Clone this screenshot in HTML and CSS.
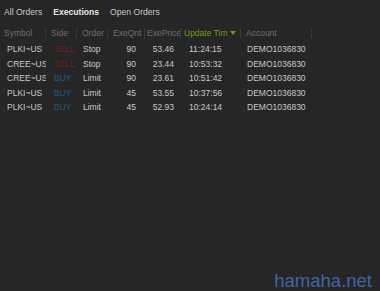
FILE: index.html
```html
<!DOCTYPE html>
<html lang="en">
<head>
    <meta charset="UTF-8">
    <title>Executions</title>
    <link rel="stylesheet" href="styles.css">
</head>
<body>
    <div class="panel">
        <div class="tabs">
            <span>All Orders</span>
            <span class="active">Executions</span>
            <span>Open Orders</span>
        </div>
        <div class="grid">
            <div class="row head">
                <div class="c sym">Symbol</div>
                <div class="c side">Side</div>
                <div class="c ord">Order</div>
                <div class="c qty">ExeQnt</div>
                <div class="c price">ExePrice</div>
                <div class="c time sorted">Update Tim<span class="arrow"></span></div>
                <div class="c acct">Account</div>
            </div>
            <div class="row">
                <div class="c sym">PLKI~US</div>
                <div class="c side sell">SELL</div>
                <div class="c ord">Stop</div>
                <div class="c qty">90</div>
                <div class="c price">53.46</div>
                <div class="c time">11:24:15</div>
                <div class="c acct">DEMO1036830</div>
            </div>
            <div class="row">
                <div class="c sym">CREE~US</div>
                <div class="c side sell">SELL</div>
                <div class="c ord">Stop</div>
                <div class="c qty">90</div>
                <div class="c price">23.44</div>
                <div class="c time">10:53:32</div>
                <div class="c acct">DEMO1036830</div>
            </div>
            <div class="row">
                <div class="c sym">CREE~US</div>
                <div class="c side buy">BUY</div>
                <div class="c ord">Limit</div>
                <div class="c qty">90</div>
                <div class="c price">23.61</div>
                <div class="c time">10:51:42</div>
                <div class="c acct">DEMO1036830</div>
            </div>
            <div class="row">
                <div class="c sym">PLKI~US</div>
                <div class="c side buy">BUY</div>
                <div class="c ord">Limit</div>
                <div class="c qty">45</div>
                <div class="c price">53.55</div>
                <div class="c time">10:37:56</div>
                <div class="c acct">DEMO1036830</div>
            </div>
            <div class="row">
                <div class="c sym">PLKI~US</div>
                <div class="c side buy">BUY</div>
                <div class="c ord">Limit</div>
                <div class="c qty">45</div>
                <div class="c price">52.93</div>
                <div class="c time">10:24:14</div>
                <div class="c acct">DEMO1036830</div>
            </div>
        </div>
        <div class="mark">hamaha.net</div>
    </div>
</body>
</html>
```
FILE: styles.css
```css
* {
box-sizing: border-box;
}

body {
margin: 0;
background: #262626;
font-family: "Liberation Sans", Arial, sans-serif;
font-size: 8.5px;
}

.panel {
width: 380px;
height: 291px;
display: flex;
flex-direction: column;
}

.tabs {
height: 24px;
display: flex;
align-items: center;
gap: 11px;
padding-left: 4px;
color: #c8c8c8;
font-size: 8.6px;
}

.tabs .active {
font-weight: 700;
color: #e4e4e4;
}

.row {
display: grid;
grid-template-columns: 46px 31px 31px 37px 36px 60px 71px;
height: 14.5px;
align-items: center;
color: #c8c8c8;
}

.row.head {
height: 18px;
color: #6e6e6e;
}

.c {
white-space: nowrap;
overflow: hidden;
}

.head .c {
padding-left: 5px;
border-right: 1px dotted #4c4c4c;
line-height: 9px;
}

.head .sym {
padding-left: 4px;
}

.head .price {
padding-left: 2px;
}

.head .sorted {
padding-left: 3px;
color: #6d9a1e;
}

.arrow {
display: inline-block;
margin-left: 3px;
vertical-align: middle;
border-left: 3px solid transparent;
border-right: 3px solid transparent;
border-top: 4px solid #6d9a1e;
}

.sym {
padding-left: 7px;
}

.side {
padding-left: 8px;
}

.ord {
padding-left: 6px;
}

.qty {
text-align: right;
padding-right: 9px;
}

.price {
text-align: right;
padding-right: 7px;
}

.time {
padding-left: 8px;
}

.acct {
padding-left: 6px;
}

.head .qty,
.head .price {
text-align: left;
padding-right: 0;
}

.sell {
color: #741c25;
}

.buy {
color: #1e5b86;
}

.mark {
margin-top: auto;
align-self: flex-end;
margin-right: 8px;
line-height: 21px;
color: #4363a6;
font-size: 18.5px;
}
```
